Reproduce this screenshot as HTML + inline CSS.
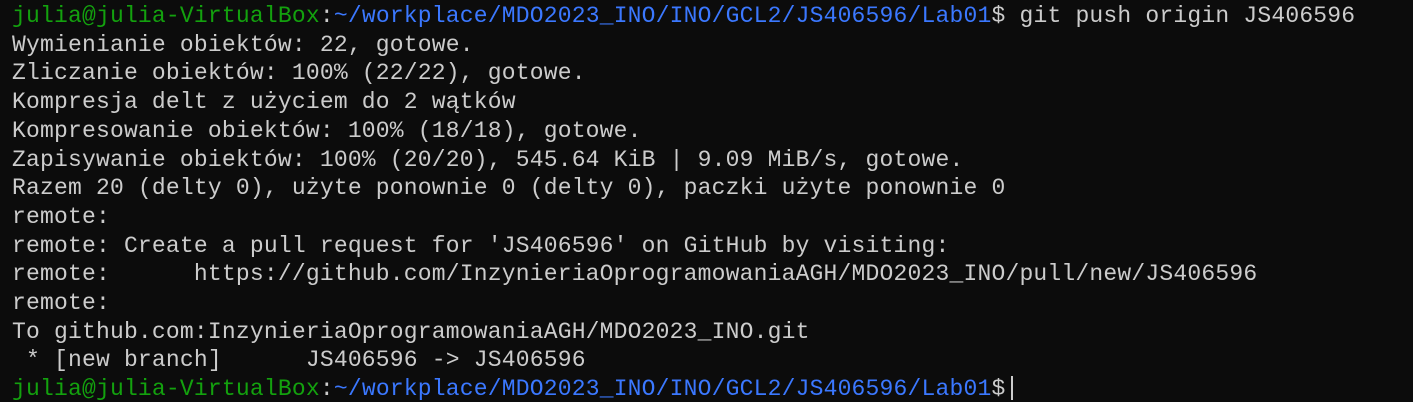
<!DOCTYPE html>
<html><head><meta charset="utf-8"><style>
html,body{margin:0;background:#0c0c0c;width:1413px;height:402px;overflow:hidden}
pre{margin:0;padding:2px 0 0 12px;font-family:"Liberation Mono",monospace;font-size:23px;line-height:28.7px;color:#cccccc;letter-spacing:0.19px}
.g{color:#13a10e}
.b{color:#3b78ff}
.c{display:inline-block;width:2px;height:24px;background:#ccc;vertical-align:-5px;margin-left:6px}
</style></head><body><pre><span class="g">julia@julia-VirtualBox</span>:<span class="b">~/workplace/MDO2023_INO/INO/GCL2/JS406596/Lab01</span>$ git push origin JS406596
Wymienianie obiektów: 22, gotowe.
Zliczanie obiektów: 100% (22/22), gotowe.
Kompresja delt z użyciem do 2 wątków
Kompresowanie obiektów: 100% (18/18), gotowe.
Zapisywanie obiektów: 100% (20/20), 545.64 KiB | 9.09 MiB/s, gotowe.
Razem 20 (delty 0), użyte ponownie 0 (delty 0), paczki użyte ponownie 0
remote:
remote: Create a pull request for 'JS406596' on GitHub by visiting:
remote:      https://github.com/InzynieriaOprogramowaniaAGH/MDO2023_INO/pull/new/JS406596
remote:
To github.com:InzynieriaOprogramowaniaAGH/MDO2023_INO.git
 * [new branch]      JS406596 -> JS406596
<span class="g">julia@julia-VirtualBox</span>:<span class="b">~/workplace/MDO2023_INO/INO/GCL2/JS406596/Lab01</span>$<span class="c"></span></pre></body></html>
